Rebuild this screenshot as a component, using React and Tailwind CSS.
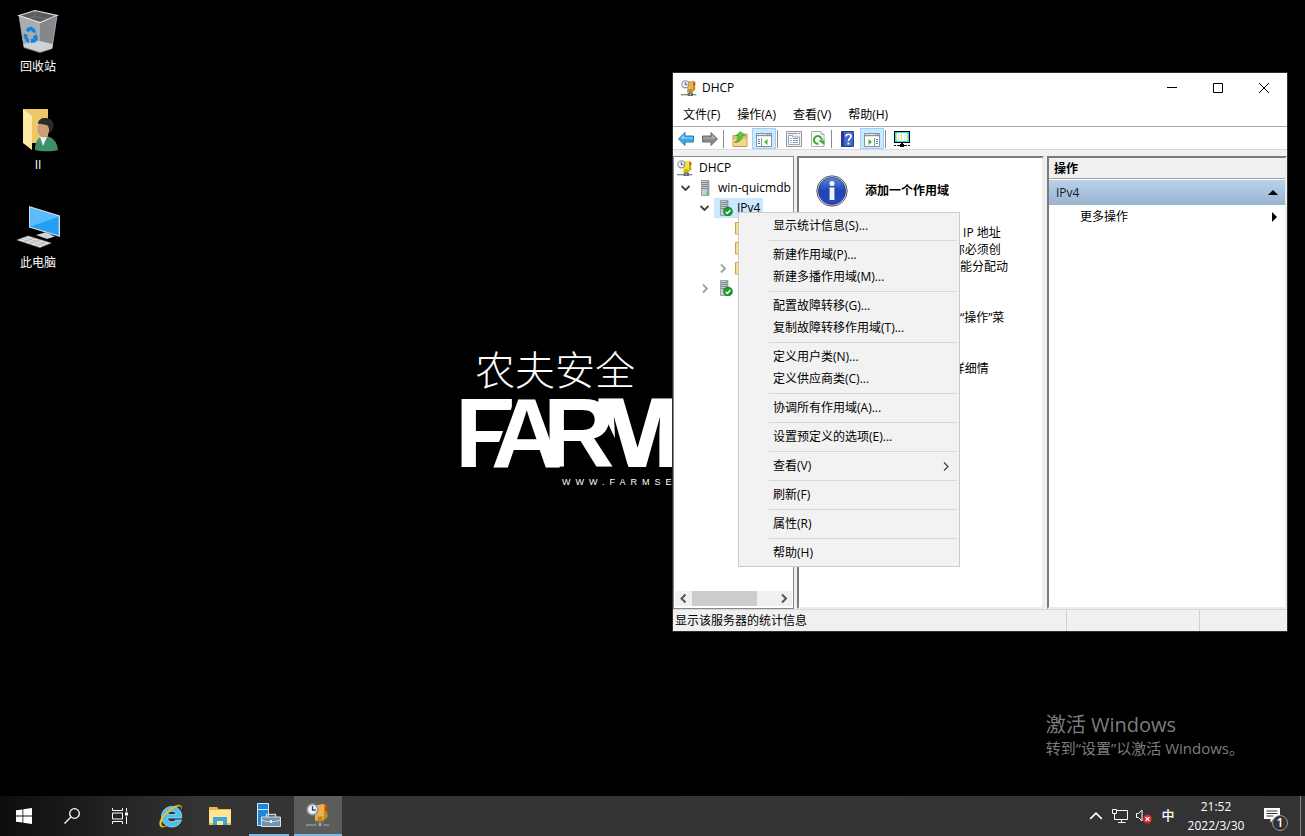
import React from "react";

const FONT = 'font-["Open_Sans","Noto_Sans_CJK_SC",sans-serif]';

/* ---------- drawings ---------- */

function DhcpIcon({ className = "size-4", box = "#c98317", light = "#eeb04a" }) {
  return (
    <svg viewBox="0 0 24 24" className={className} aria-hidden="true">
      <path d="M0 21h23v2H0z" fill="#7f868c" />
      <path d="M12 16h4v3h2v5h-8v-5h2z" fill="#62686d" />
      <path d="M13 20h2v3h-2z" fill="#a9b0b5" />
      <path d="M9 2.500L18 1l3 2v12l-4 3.500H9z" fill={box} />
      <path d="M9 2.500L18 1v14l-2 2H9z" fill={light} />
      <path d="M11 14l6-1-1.500 4H12z" fill={box} />
      <path d="M19 3.500h2.500V8H19z" fill="#d8352a" />
      <path d="M19 11h2.500v3H19z" fill="#6fae48" />
      <circle cx="6.500" cy="6.500" r="5.300" fill="#eef3f9" stroke="#8896a8" strokeWidth="1.700" />
      <path d="M6.500 3v4h3.200" fill="none" stroke="#33475e" strokeWidth="1.300" />
    </svg>
  );
}

function ServerIcon({ ok }) {
  return (
    <svg viewBox="0 0 16 16" className="size-4 shrink-0" aria-hidden="true">
      <path d="M3.500 .5h7.500v15H3.500z" fill="#9aa5ad" />
      <path d="M3.500 .5h5.500v15H3.500z" fill="#c5ced4" />
      <path d="M4 2.500h5M4 4.500h5M4 6.500h5M4 8.500h5" stroke="#7b8790" strokeWidth="1" />
      <path d="M3.500 .5h7.500v15H3.500z" fill="none" stroke="#7b868e" strokeWidth=".6" />
      {ok ? (
        <>
          <circle cx="11" cy="11.500" r="4.500" fill="#189a2b" stroke="#0d7a1e" strokeWidth=".6" />
          <path d="M8.700 11.700l1.700 1.700 3-3.400" fill="none" stroke="#fff" strokeWidth="1.500" />
        </>
      ) : (
        <path d="M8 12.500h2v2H8z" fill="#4be03c" />
      )}
    </svg>
  );
}

function FolderIcon() {
  return (
    <svg viewBox="0 0 16 16" className="size-4 shrink-0" aria-hidden="true">
      <path d="M.500 2.500h6l1 1.500h8v10H.500z" fill="#f7dc8c" stroke="#c9a349" strokeWidth="1" />
    </svg>
  );
}

function Chevron({ dir = "down", className = "size-[11px]", stroke = "#404040", width = 1.8 }) {
  const d = {
    down: "M1.500 3l4 4 4-4",
    right: "M4 1.500l4 4-4 4",
    left: "M7.500 1.500l-4 4 4 4",
    up: "M1.500 7.500l4-4 4 4",
  }[dir];
  return (
    <svg viewBox="0 0 11 11" className={className} aria-hidden="true">
      <path d={d} fill="none" stroke={stroke} strokeWidth={width} />
    </svg>
  );
}

function RecycleBin() {
  return (
    <svg viewBox="0 0 48 48" className="size-12" aria-hidden="true">
      <path d="M5 8.500l21 7v29.500L10 40z" fill="#a9acb0" />
      <path d="M26 15.500l17-6-5 32-12 3.500z" fill="#84888d" />
      <path d="M5 8.500l16-5 22 5-17 7z" fill="#5b5a5c" />
      <path d="M21 3.500v6l-8 2M21 9.500l12 2.500" stroke="#77767a" strokeWidth="1" fill="none" />
      <path d="M9.500 37l16.500-3 13 3-1 4.500-12 3.500-16-5z" fill="#cfd2d5" />
      <path d="M5 8.500l16-5 22 5-17 7z" fill="none" stroke="#e3e5e7" strokeWidth="1.200" />
      <path d="M5 8.500L10 40.500l16 5M43 8.500l-5 33-12 4" fill="none" stroke="#c0c3c6" strokeWidth=".7" />
      <g fill="#1583dc">
        <path d="M13 21l4-1.500 4 2.500 1 4-4-1-1-2-2 2-3-1z" />
        <path d="M22.500 27l1.500 5-3 3.500-4 .5v-4l2.500-.5-.500-2z" />
        <path d="M10 26.500l4 1.500-1 2 2 2v4l-3-1.500-2.500-5z" />
      </g>
    </svg>
  );
}

function UserFolder() {
  return (
    <svg viewBox="0 0 48 48" className="size-12" aria-hidden="true">
      <path d="M9 4h25v34H9z" fill="#eec768" />
      <path d="M9 4l9 7v34l-9-7z" fill="#ffe9a6" />
      <path d="M21 45c0-9 3-13 9-14 8 0 13 5 14 14-6 2-18 1.500-23 0z" fill="#3f8f6b" />
      <path d="M26 32l3 9 4-9z" fill="#eef2f2" />
      <ellipse cx="29.500" cy="24" rx="6" ry="8.500" fill="#c99e78" />
      <path d="M24 19c0-8 15-8 15.500 1 0 3-1 5-3.500 8-1-4-1-6-3-8-3 0-6-2-9-1z" fill="#2b2a2c" />
    </svg>
  );
}

function ThisPc() {
  return (
    <svg viewBox="0 0 48 48" className="size-12" aria-hidden="true">
      <path d="M15 3l31 9.500V34l-31-9.500z" fill="#d5dade" />
      <path d="M16.200 4.800l28.400 8.700v18.700l-28.400-8.500z" fill="#22a0f5" />
      <path d="M16.200 4.800l28.400 8.700-28.400 10.200z" fill="#5cbcfb" />
      <path d="M33 29.500l4 1v4l-6-1z" fill="#9ba1a6" />
      <path d="M22 32l9-2.500 10 4-8 2.500z" fill="#cfd4d8" />
      <path d="M3 37l11-4 23 7-11 4.500z" fill="#e4e7e9" stroke="#a4a9ae" strokeWidth=".6" />
      <path d="M7 35.800l23 7M10 34.500l23 7M9 39l11-4M15 41l11-4M21 43l10-4" stroke="#a4a9ae" strokeWidth=".7" />
    </svg>
  );
}

function InfoIcon() {
  return (
    <svg viewBox="0 0 32 32" className="size-8 shrink-0" aria-hidden="true">
      <defs>
        <linearGradient id="info" x1="0" y1="0" x2="0" y2="1">
          <stop offset="0" stopColor="#5f86dd" />
          <stop offset=".5" stopColor="#1f45b4" />
          <stop offset="1" stopColor="#2747c4" />
        </linearGradient>
      </defs>
      <circle cx="16" cy="16" r="15.200" fill="#d6d9df" stroke="#55585f" strokeWidth="1" />
      <circle cx="16" cy="16" r="13.500" fill="url(#info)" stroke="#1b2f86" strokeWidth=".8" />
      <circle cx="16" cy="8.500" r="2.500" fill="#fff" />
      <path d="M13.600 12.500h4.800v12.500h-4.800z" fill="#f3f3f3" />
    </svg>
  );
}

function ArrowIcon({ back }) {
  return (
    <svg viewBox="0 0 16 16" className="size-4" aria-hidden="true">
      {back ? (
        <>
          <path d="M.500 8L7 1.500v3.500h8.500v6H7v3.500z" fill="#3fa9e8" stroke="#2b7fb8" strokeWidth="1" />
          <path d="M2.500 7.500L6 4v2.500h8.500v1z" fill="#9bdcff" />
        </>
      ) : (
        <>
          <path d="M15.500 8L9 1.500v3.500H.500v6H9v3.500z" fill="#8b8b8b" stroke="#6e6e6e" strokeWidth="1" />
          <path d="M13.500 7.500L10 4v2.500H1.500v1z" fill="#b5b5b5" />
        </>
      )}
    </svg>
  );
}

function UpFolderIcon() {
  return (
    <svg viewBox="0 0 16 16" className="size-4" aria-hidden="true">
      <path d="M1 4.500h8l2-1.500h4v12.500H1z" fill="#e3bf6c" stroke="#c19b4b" strokeWidth="1" />
      <path d="M1.500 8h13v7h-13z" fill="#f3d78f" />
      <path d="M2.500 11.500c3-2 3.500-4 3.500-7H4L8.500 .5 13 4.500h-2.500c0 4-3 7-8 7z" fill="#5fc43a" stroke="#3a8f22" strokeWidth=".6" />
    </svg>
  );
}

function PaneIcon({ flip }) {
  return (
    <svg viewBox="0 0 16 16" className="size-4" aria-hidden="true">
      <path d="M.500 2.500h15v13H.500z" fill="#fff" stroke="#87929d" />
      <path d="M0 2h16v4H0z" fill="#87929d" />
      <path d="M1 3.500h10M12 3.500h1M14 3.500h1M1 5.500h14" stroke="#dfe6ec" />
      <path d={flip ? "M10.500 7v8" : "M5.500 7v8"} stroke="#87929d" />
      <path d={flip ? "M12 8.500h2M12 10.500h2M12 12.500h2" : "M2 8.500h2M2 10.500h2M2 12.500h2"} stroke="#3c78b4" />
      <path d={flip ? "M4.500 8l3.500 3-3.500 3z" : "M11.500 8L8 11l3.500 3z"} fill="#4bb52e" />
    </svg>
  );
}

function PropertiesIcon() {
  return (
    <svg viewBox="0 0 16 16" className="size-4" aria-hidden="true">
      <path d="M.500 .5h15v15H.500z" fill="#eef1f4" stroke="#9299a1" />
      <path d="M2 2.500h9M12 2.500h2" stroke="#8f9aa5" />
      <path d="M2.500 4.500h4v1.500h7v7.500h-11z" fill="#fff" stroke="#9ca6b0" />
      <path d="M4 7.500h1.500M7 7.500h5M4 9.500h1.500M7 9.500h5M4 11.500h1.500M7 11.500h5" stroke="#7a9abb" />
    </svg>
  );
}

function RefreshIcon() {
  return (
    <svg viewBox="0 0 16 16" className="size-4" aria-hidden="true">
      <path d="M1.500 .5h9.500l3 3v12H1.500z" fill="#fbfbfb" stroke="#b0b0b0" />
      <path d="M11 .5v3h3" fill="#e5e5e5" stroke="#b0b0b0" />
      <path d="M8.500 12.800a3.900 3.900 0 1 1 3.200-3.500" fill="none" stroke="#38ad32" strokeWidth="2" />
      <path d="M8 9.500h6.500v4.500z" fill="#38ad32" />
    </svg>
  );
}

function HelpIcon() {
  return (
    <svg viewBox="0 0 16 16" className="size-4" aria-hidden="true">
      <path d="M1.500 .5h12v15h-12z" fill="#4568cc" stroke="#2a418f" />
      <path d="M1.500 .5h2.500v15h-2.500z" fill="#223c96" />
      <path d="M6 5.500c0-3 5-3 5 0 0 2-2.500 2-2.500 4.500" fill="none" stroke="#fff" strokeWidth="1.700" />
      <path d="M7.500 11.500h2v2h-2z" fill="#fff" />
    </svg>
  );
}

function NetworkScreenIcon() {
  return (
    <svg viewBox="0 0 16 16" className="size-4" aria-hidden="true" shapeRendering="crispEdges">
      <path d="M0 0h16v12H0z" fill="#000" />
      <path d="M1 1h14v10H1z" fill="#22e4ee" />
      <path d="M3 2h4v8H3zM9 2h4v8H9z" fill="#fff" />
      <path d="M7 2h2v8H7z" fill="#fff" />
      <path d="M4 4h2v1H4zM10 4h2v1h-2zM4 6h2v1H4zM10 6h2v1h-2zM4 8h2v1H4zM10 8h2v1h-2z" fill="#b8f4f0" />
      <path d="M2 3h1v6H2zM7 3h1v6H7zM13 3h1v6h-1z" fill="#f0e04a" />
      <path d="M7 12h2v1H7zM0 14h2v1H0zM3 14h10v1H3zM14 14h2v1h-2zM6 13h4v3H6z" fill="#000" />
    </svg>
  );
}

/* ---------- desktop ---------- */

const shortcuts = [
  { label: "回收站", Icon: RecycleBin },
  { label: "II", Icon: UserFolder },
  { label: "此电脑", Icon: ThisPc },
];

function Shortcut({ label, Icon }) {
  return (
    <button type="button" className="flex h-[98px] w-[76px] flex-col items-center text-white">
      <Icon />
      <span className="mt-0.5 leading-5">{label}</span>
    </button>
  );
}

function Wallpaper() {
  return (
    <div className="absolute left-[460px] top-[345px] text-white">
      <svg viewBox="0 0 220 150" width="220" height="150" role="img" aria-label="农夫安全 FARM">
        <text x="15" y="40" fontSize="40" fontWeight="300" fill="#fff" fontFamily="Noto Sans CJK SC, sans-serif">
          农夫安全
        </text>
        <g fill="#fff" fontFamily="Liberation Sans, sans-serif" fontWeight="700" fontSize="99">
          <text x="-5" y="122">F</text>
          <text x="31" y="122" stroke="#000" strokeWidth="7" paintOrder="stroke">A</text>
          <text x="131" y="122" fontFamily="Open Sans, sans-serif" fontWeight="800" fontSize="96">M</text>
          <path d="M144 70L169 123h-31l-8-45z" fill="#000" />
          <text x="83" y="122">R</text>
        </g>
        <text x="102" y="140" fontSize="9" fill="#fff" className="tracking-[5px]" fontFamily="Liberation Sans, sans-serif">
          WWW.FARMSE
        </text>
      </svg>
    </div>
  );
}

/* ---------- DHCP window ---------- */

function TitleBar() {
  const control = "flex h-full w-[46px] items-center justify-center";
  return (
    <header className="flex h-[30px] items-center bg-white pl-2">
      <DhcpIcon />
      <h1 className="ml-[5px] flex-1">DHCP</h1>
      <button type="button" aria-label="最小化" className={control}>
        <svg viewBox="0 0 10 10" className="size-2.5"><path d="M0 4.500h10" stroke="#000" /></svg>
      </button>
      <button type="button" aria-label="最大化" className={control}>
        <svg viewBox="0 0 10 10" className="size-2.5"><path d="M.500 .5h9v9h-9z" fill="none" stroke="#000" /></svg>
      </button>
      <button type="button" aria-label="关闭" className={control}>
        <svg viewBox="0 0 10 10" className="size-2.5"><path d="M0 0l10 10M10 0L0 10" stroke="#000" /></svg>
      </button>
    </header>
  );
}

function MenuBar() {
  return (
    <nav className="flex h-[23px] items-center gap-px bg-white pl-0.5">
      {["文件(F)", "操作(A)", "查看(V)", "帮助(H)"].map((item) => (
        <button key={item} type="button" className="px-2">{item}</button>
      ))}
    </nav>
  );
}

function Tool({ label, active, children }) {
  return (
    <button
      type="button"
      aria-label={label}
      className={
        active
          ? "flex h-[21px] w-6 items-end justify-center border border-[#99d1ff] bg-[#cce8ff] pb-px"
          : "flex h-[21px] w-6 items-end justify-center pb-0.5"
      }
    >
      {children}
    </button>
  );
}

function ToolSeparator() {
  return <span className="mb-px ml-px mr-1 h-[18px] w-px bg-[#8c8c8c]" />;
}

function Toolbar() {
  return (
    <div role="toolbar" className="flex h-6 items-end border-b border-t border-b-[#d9d9d9] border-t-[#a9a9a9] bg-white pl-px">
      <Tool label="后退"><ArrowIcon back /></Tool>
      <Tool label="前进"><ArrowIcon /></Tool>
      <ToolSeparator />
      <Tool label="向上"><UpFolderIcon /></Tool>
      <Tool label="显示控制台树" active><PaneIcon /></Tool>
      <ToolSeparator />
      <Tool label="属性"><PropertiesIcon /></Tool>
      <Tool label="刷新"><RefreshIcon /></Tool>
      <ToolSeparator />
      <Tool label="帮助"><HelpIcon /></Tool>
      <Tool label="显示操作窗格" active><PaneIcon flip /></Tool>
      <ToolSeparator />
      <Tool label="服务器"><NetworkScreenIcon /></Tool>
    </div>
  );
}

function TreeRow({ indent, chevron, selected, icon, children }) {
  return (
    <li className={`flex h-5 items-center ${indent}`}>
      <span className="flex w-[19px] shrink-0 items-center justify-center">
        {chevron && <Chevron dir={chevron} stroke={chevron === "down" ? "#404040" : "#a0a0a0"} />}
      </span>
      <span className={`flex h-5 shrink-0 items-center gap-1 px-[3px] ${selected ? "bg-[#cce8ff]" : ""}`}>
        {icon}
        {children}
      </span>
    </li>
  );
}

function TreePanel() {
  return (
    <section className="flex w-[121px] flex-col overflow-hidden border border-[#828790] bg-white p-px">
      <ul className="flex-1 overflow-hidden whitespace-nowrap">
        <li className="flex h-5 items-center gap-1.5 pl-0.5">
          <DhcpIcon box="#c9b800" light="#f2e635" />
          DHCP
        </li>
        <TreeRow indent="pl-px" chevron="down" icon={<ServerIcon />}>win-quicmdb</TreeRow>
        <TreeRow indent="pl-5" chevron="down" selected icon={<ServerIcon ok />}>IPv4</TreeRow>
        <TreeRow indent="pl-[38px]" icon={<FolderIcon />} />
        <TreeRow indent="pl-[38px]" icon={<FolderIcon />} />
        <TreeRow indent="pl-[38px]" chevron="right" icon={<FolderIcon />} />
        <TreeRow indent="pl-5" chevron="right" icon={<ServerIcon ok />} />
      </ul>
      <div className="mb-px flex h-[15px] bg-[#f0f0f0]">
        <button type="button" aria-label="向左滚动" className="flex w-[17px] items-center justify-center">
          <Chevron dir="left" stroke="#555" width={2} />
        </button>
        <div className="flex-1">
          <div className="h-full w-[65px] bg-[#cdcdcd]" />
        </div>
        <button type="button" aria-label="向右滚动" className="flex w-[17px] items-center justify-center">
          <Chevron dir="right" stroke="#555" width={2} />
        </button>
      </div>
    </section>
  );
}

const sunken = "border-2 border-b-[#ececec] border-l-[#7a7a7a] border-r-[#ececec] border-t-[#7a7a7a] bg-white";

function DetailPanel() {
  return (
    <section className={`ml-[3px] flex-1 overflow-hidden ${sunken}`}>
      <div className="flex items-center gap-[17px] pl-[17px] pt-[17px]">
        <InfoIcon />
        <h2 className="font-bold">添加一个作用域</h2>
      </div>
      <div className="mt-[17px] whitespace-nowrap pl-[65px] leading-[17px]">
        <p>
          作用域是用于分配 IP 地址<br />
          的 IP 地址范围。你必须创<br />
          建一个作用域，才能分配动<br />
          态 IP 地址。
        </p>
        <p className="mt-[17px]">
          要添加作用域请在“操作”菜<br />
          单上操作。
        </p>
        <p className="mt-[17px]">
          有关新 IP 地址的详细情<br />
          况，请看帮助。
        </p>
      </div>
    </section>
  );
}

function ActionsPanel() {
  return (
    <section className={`ml-[3px] w-[240px] ${sunken}`}>
      <h2 className="h-[21px] border-b border-[#a0a0a0] bg-[#f0f0f0] pl-[5px] font-bold leading-[21px]">操作</h2>
      <button
        type="button"
        className="mt-px flex h-[25px] w-full items-center justify-between bg-linear-to-b from-[#b9d1ea] to-[#99b4d1] pl-[7px] pr-[7px] text-[#16202c]"
      >
        IPv4
        <svg viewBox="0 0 10 5" className="h-[5px] w-2.5"><path d="M0 5l5-5 5 5z" fill="#000" /></svg>
      </button>
      <button type="button" className="flex h-6 w-full items-center justify-between pl-[31px] pr-2">
        更多操作
        <svg viewBox="0 0 5 10" className="h-2.5 w-[5px]"><path d="M0 0l5 5-5 5z" fill="#000" /></svg>
      </button>
    </section>
  );
}

function StatusBar() {
  return (
    <footer className="flex h-[22px] items-center border-t border-[#d7d7d7] pl-0.5">
      <span className="flex-1">显示该服务器的统计信息</span>
      <span className="h-full w-[133px] border-l border-[#d0d0d0]" />
      <span className="h-full w-[88px] border-l border-[#d0d0d0]" />
    </footer>
  );
}

const menuGroups = [
  ["显示统计信息(S)..."],
  ["新建作用域(P)...", "新建多播作用域(M)..."],
  ["配置故障转移(G)...", "复制故障转移作用域(T)..."],
  ["定义用户类(N)...", "定义供应商类(C)..."],
  ["协调所有作用域(A)..."],
  ["设置预定义的选项(E)..."],
  ["查看(V)"],
  ["刷新(F)"],
  ["属性(R)"],
  ["帮助(H)"],
];

function ContextMenu() {
  return (
    <div role="menu" className="absolute left-[65px] top-[139px] w-[222px] border border-[#cccccc] bg-[#f2f2f2] py-0.5">
      {menuGroups.map((group, i) => (
        <div key={group[0]}>
          {i > 0 && <hr className="my-[3px] ml-[30px] mr-0.5 border-[#d7d7d7]" />}
          {group.map((item) => (
            <button
              key={item}
              type="button"
              role="menuitem"
              className="flex h-[22px] w-full items-center justify-between pl-[34px] pr-2"
            >
              {item}
              {item === "查看(V)" && <Chevron dir="right" width={1.2} />}
            </button>
          ))}
        </div>
      ))}
    </div>
  );
}

function DhcpWindow() {
  return (
    <main className="absolute left-[673px] top-[73px] flex h-[558px] w-[614px] flex-col bg-[#f0f0f0] ring-1 ring-[#2e2e2e]">
      <TitleBar />
      <MenuBar />
      <Toolbar />
      <div className="flex min-h-0 flex-1 pt-1.5">
        <TreePanel />
        <DetailPanel />
        <ActionsPanel />
      </div>
      <StatusBar />
      <ContextMenu />
    </main>
  );
}

/* ---------- taskbar ---------- */

function TaskButton({ label, state, children }) {
  const look = {
    active: "flex w-12 items-center justify-center border-b-2 border-[#76b9ed] bg-[#5b5d5b]",
    open: "mx-1 flex w-10 items-center justify-center border-b-2 border-[#76b9ed]",
    idle: "flex w-12 items-center justify-center",
  }[state || "idle"];
  return <button type="button" aria-label={label} className={look}>{children}</button>;
}

function Taskbar() {
  const tray = "flex w-6 items-center justify-center";
  return (
    <footer className="flex h-10 bg-linear-to-r from-[#0d0d0d] via-[#343434] via-15% to-[#333333] text-white">
      <TaskButton label="开始">
        <svg viewBox="0 0 16 16" className="size-4"><path d="M0 2.300l6.500-.9v6.200H0zM7.300 1.300L16 0v7.600H7.300zM0 8.400h6.500v6.200L0 13.700zM7.300 8.400H16V16l-8.700-1.300z" fill="#fff" /></svg>
      </TaskButton>
      <TaskButton label="搜索">
        <svg viewBox="0 0 16 16" className="size-4"><circle cx="10.500" cy="5.500" r="4.800" fill="none" stroke="#fff" strokeWidth="1.300" /><path d="M7 9L.500 15.500" stroke="#fff" strokeWidth="1.300" /></svg>
      </TaskButton>
      <TaskButton label="任务视图">
        <svg viewBox="0 0 16 16" className="size-4"><path d="M.500 0v2.500h10V0M.500 16v-2.500h10V16M.500 5h10v6H.500zM14.500 0v3.500M14.500 8.500V16" fill="none" stroke="#fff" /><path d="M13 4.500h3v3h-3z" fill="#fff" /></svg>
      </TaskButton>
      <div className="ml-[3px] flex gap-px">
        <TaskButton label="Internet Explorer">
          <svg viewBox="0 0 24 24" className="size-6">
            <path d="M22.500 16h-6c-2 2.800-8 2-7.800-2h14C23.200 6.500 18.500 2.500 13 2.500 7 2.500 2.500 7 2.500 12.800S7 23 13 23c4.500 0 8-2.500 9.500-7zM8.800 10.500c.5-4.200 8-4.200 8.300 0z" fill="#4cc1f1" stroke="#b4ecff" strokeWidth=".7" />
            <path d="M22.500 5c1-4.500-3-5-7.500-2.500C8 6 .5 14 .5 19.500c0 5 4.500 4.300 8 2-3.500 1.300-6 1-6-1.800C2.500 14 11 5.500 18 2.800c3-1 4.500-.5 4.500 2.200z" fill="#f5c832" stroke="#d49b12" strokeWidth=".4" />
          </svg>
        </TaskButton>
        <TaskButton label="文件资源管理器">
          <svg viewBox="0 0 24 24" className="size-6">
            <path d="M1 3h8l1.500 2H23v16H1z" fill="#e9b84b" />
            <path d="M1 6h22v15H1z" fill="#ffe591" />
            <path d="M5 21v-8h14v8h-4v-4H9v4z" fill="#36a9e0" />
            <path d="M1 19h4v2H1zM19 19h4v2h-4z" fill="#f2bf4c" />
          </svg>
        </TaskButton>
        <TaskButton label="服务器管理器" state="open">
          <svg viewBox="0 0 24 24" className="size-6">
            <path d="M.500 .5h11v22H.500z" fill="#1a87d9" stroke="#d3e8f7" />
            <path d="M.500 6.500h11" stroke="#d3e8f7" />
            <path d="M9.500 14v-2.500h9V14" fill="none" stroke="#c8d3da" strokeWidth="1.400" />
            <path d="M4.500 14h19v9.500h-19z" fill="#6f93aa" stroke="#d5e0e7" />
            <path d="M5 17c6 2.500 12 2.500 18 0" fill="none" stroke="#d5e0e7" />
            <path d="M13 17h2v3h-2z" fill="#eef4f8" />
          </svg>
        </TaskButton>
        <TaskButton label="DHCP" state="active">
          <DhcpIcon className="size-6" />
        </TaskButton>
      </div>
      <div className="ml-auto flex">
        <button type="button" aria-label="显示隐藏的图标" className={tray}>
          <Chevron dir="up" stroke="#fff" width={1.1} className="size-4" />
        </button>
        <button type="button" aria-label="网络" className={tray}>
          <svg viewBox="0 0 16 14" className="h-3.5 w-4"><path d="M4.500 1.500h11v9H2.500v-6M9.500 10.500v3M6 13.500h7.500M.500 .5h4v4h-4z" fill="none" stroke="#fff" /></svg>
        </button>
        <button type="button" aria-label="音量" className={tray}>
          <svg viewBox="0 0 16 16" className="size-4"><path d="M.500 5.500h2l3.500-3.500v11L2.500 9.500h-2z" fill="none" stroke="#fff" /><circle cx="11.500" cy="11" r="4.500" fill="#d9262c" /><path d="M9.500 9l4 4M13.500 9l-4 4" stroke="#fff" strokeWidth="1.200" /></svg>
        </button>
        <button type="button" className={`${tray} text-[13px] font-medium`}>中</button>
        <button type="button" className="flex w-[72px] flex-col items-center justify-center leading-[19px]">
          <span>21:52</span>
          <span>2022/3/30</span>
        </button>
        <button type="button" aria-label="通知" className="relative flex w-12 justify-center pt-3">
          <svg viewBox="0 0 16 15" className="mr-2 h-[15px] w-4"><path d="M0 0h16v11H9.500l-3 4v-4H0z" fill="#fff" /><path d="M2.500 3h11M2.500 5.500h11M2.500 8h7" stroke="#333" /></svg>
          <span className="absolute right-3 top-[19px] flex size-4 items-center justify-center rounded-full border border-[#9a9a9a] bg-[#333] font-semibold leading-none">1</span>
        </button>
        <button type="button" aria-label="显示桌面" className="w-[5px] border-l border-[#8a8a8a]" />
      </div>
    </footer>
  );
}

export default function App() {
  return (
    <div className={`flex min-h-screen flex-col overflow-hidden bg-black text-xs text-black ${FONT}`}>
      <div className="relative flex-1">
        <div className="flex flex-col items-start pt-[7px]">
          {shortcuts.map((s) => <Shortcut key={s.label} {...s} />)}
        </div>
        <Wallpaper />
        <DhcpWindow />
        <aside className="absolute bottom-[37px] right-[61px] text-[#7d7d7d]">
          <p className="text-xl leading-6">激活 Windows</p>
          <p className="text-[15px] leading-[22px]">转到“设置”以激活 Windows。</p>
        </aside>
      </div>
      <Taskbar />
    </div>
  );
}
